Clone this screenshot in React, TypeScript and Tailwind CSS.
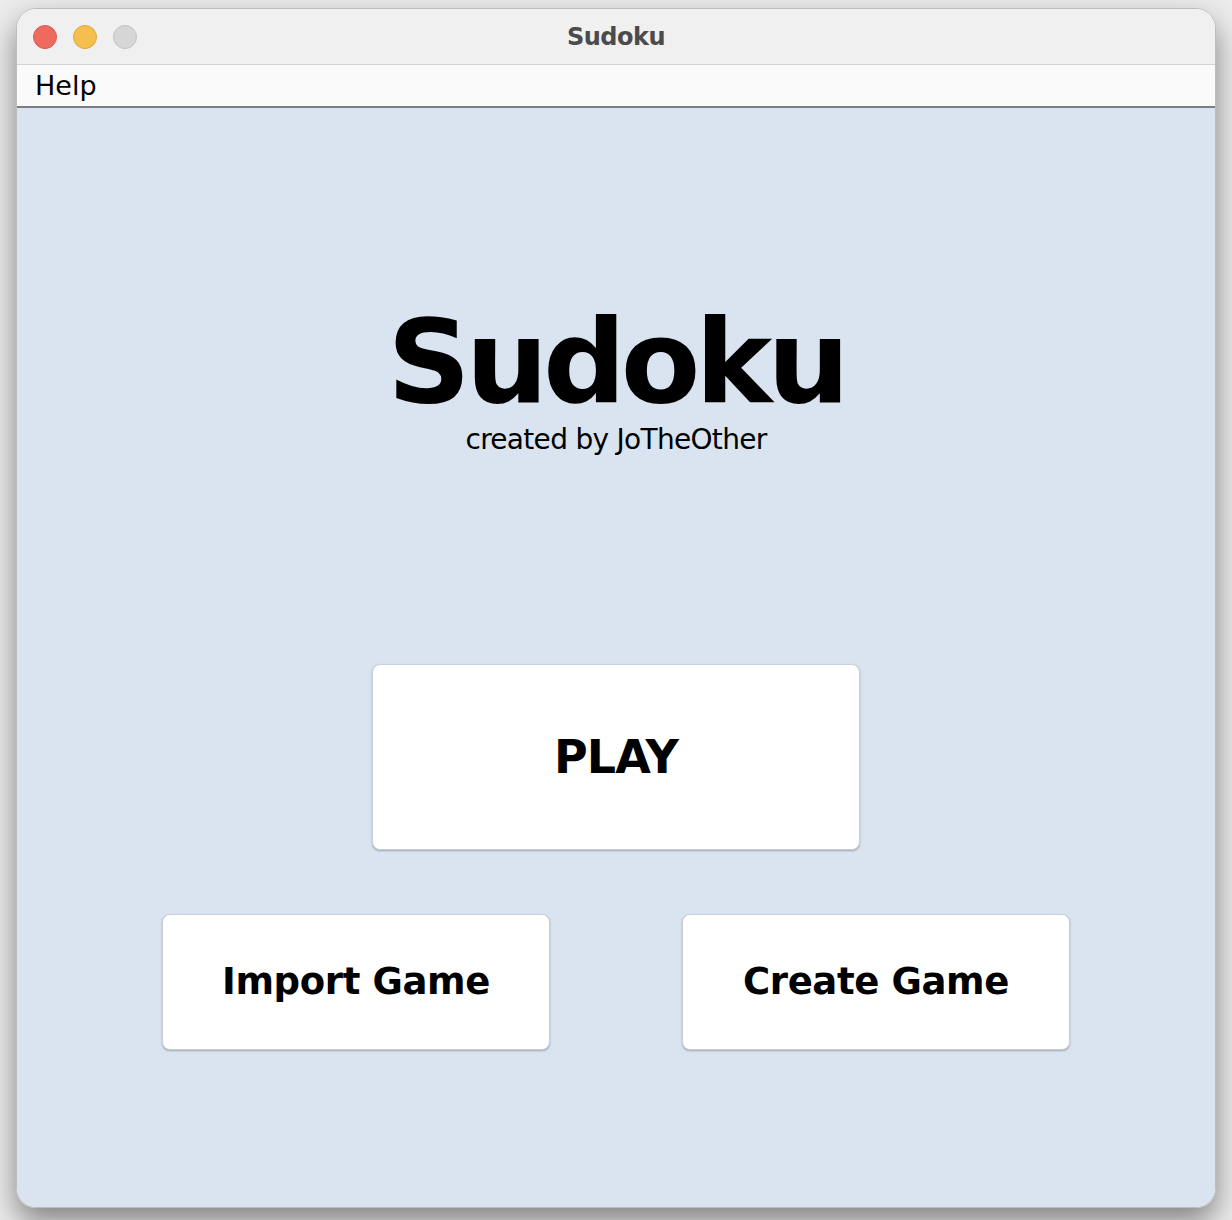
import React from "react";

const font = { fontFamily: '"DejaVu Sans", "Liberation Sans", sans-serif' };

function TrafficLights() {
  return (
    <div className="flex items-center gap-4 pl-4">
      <div className="w-6 h-6 rounded-full bg-[#ee6a5f] border border-[#d65c51]" />
      <div className="w-6 h-6 rounded-full bg-[#f5bf4f] border border-[#dba73f]" />
      <div className="w-6 h-6 rounded-full bg-[#d6d6d6] border border-[#c2c2c2]" />
    </div>
  );
}

function MenuButton({
  label,
  className,
  textClass,
}: {
  label: string;
  className: string;
  textClass: string;
}) {
  return (
    <button
      className={`bg-white rounded-[8px] border border-[#c8d0da] shadow-[0_1px_2px_rgba(0,0,0,0.28)] flex items-center justify-center text-black font-bold ${className}`}
    >
      <span className={textClass}>{label}</span>
    </button>
  );
}

export default function App() {
  return (
    <div
      className="w-[1232px] h-[1220px] bg-[#ececec] pt-[8px] pl-[16px]"
      style={font}
    >
      <div className="w-[1200px] h-[1200px] rounded-[20px] overflow-hidden border border-[#bdbdbd] shadow-[0_14px_30px_rgba(0,0,0,0.45)] flex flex-col">
        {/* title bar */}
        <div className="relative h-[56px] bg-[#f0f0f0] border-b border-[#d4d4d4] flex items-center shrink-0">
          <TrafficLights />
          <div className="absolute inset-0 flex items-center justify-center text-[24px] font-bold text-[#4b4b4b] tracking-[-0.02em]">
            Sudoku
          </div>
        </div>
        {/* menu bar */}
        <div className="h-[43px] bg-[#fafafa] border-b-2 border-[#7e7e7e] flex items-center pl-[18px] shrink-0">
          <span className="text-[27px] leading-[41px] text-black">Help</span>
        </div>
        {/* content */}
        <div className="flex-1 bg-[#d9e4f0] flex flex-col items-center">
          <h1 className="mt-[196px] h-[112px] text-[116px] leading-none font-bold text-black tracking-[-0.045em]">
            Sudoku
          </h1>
          <p className="mt-[10px] text-[28px] leading-none text-black tracking-[-0.025em]">
            created by JoTheOther
          </p>
          <MenuButton
            label="PLAY"
            className="mt-[210px] w-[488px] h-[186px]"
            textClass="text-[46px] tracking-[-0.02em]"
          />
          <div className="mt-[64px] flex gap-[132px]">
            <MenuButton
              label="Import Game"
              className="w-[388px] h-[136px]"
              textClass="text-[37px] tracking-[-0.01em]"
            />
            <MenuButton
              label="Create Game"
              className="w-[388px] h-[136px]"
              textClass="text-[37px] tracking-[-0.01em]"
            />
          </div>
        </div>
      </div>
    </div>
  );
}
